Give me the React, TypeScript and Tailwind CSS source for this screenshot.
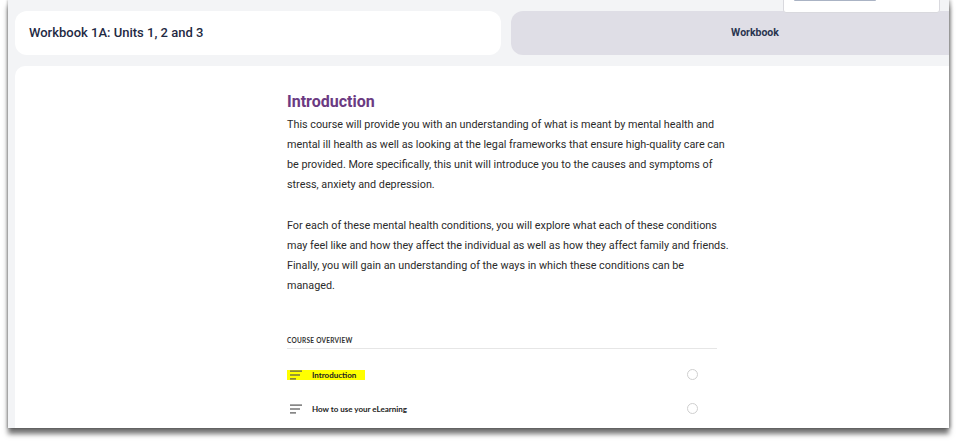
import React from "react";

const lessons = [
  { title: "Introduction", active: true },
  { title: "How to use your eLearning", active: false },
];

const intro = [
  "This course will provide you with an understanding of what is meant by mental health and",
  "mental ill health as well as looking at the legal frameworks that ensure high-quality care can",
  "be provided. More specifically, this unit will introduce you to the causes and symptoms of",
  "stress, anxiety and depression.",
];

const conditions = [
  "For each of these mental health conditions, you will explore what each of these conditions",
  "may feel like and how they affect the individual as well as how they affect family and friends.",
  "Finally, you will gain an understanding of the ways in which these conditions can be",
  "managed.",
];

function LinesIcon() {
  return (
    <svg width="12" height="10" viewBox="0 0 12 10" className="shrink-0">
      <rect x="0" y="0.5" width="12" height="1.2" fill="#555" />
      <rect x="0" y="4.4" width="10" height="1.2" fill="#555" />
      <rect x="0" y="8.3" width="6" height="1.2" fill="#555" />
    </svg>
  );
}

export default function App() {
  return (
    <div className="w-[958px] h-[443px] bg-white overflow-hidden" style={{ fontFamily: "Roboto, sans-serif" }}>
      <div className="ml-[8px] w-[941px] h-[428px] bg-[#f3f4f6] relative overflow-hidden shadow-[0_6px_5px_rgba(0,0,0,0.55),2px_0_3px_rgba(0,0,0,0.25),-1px_0_2px_rgba(0,0,0,0.2)]">
        {/* popup peeking at the top */}
        <div className="absolute top-[-4px] left-[775px] w-[157px] h-[17px] bg-white border border-[#d9d9de] rounded-b-[3px] px-[10px]">
          <div className="h-[2px] w-[82px] mt-[2px] bg-[#aab3c4] rounded-[1px]" />
        </div>

        {/* top row */}
        <div className="flex gap-[10px] pl-[7px] pt-[11px] w-[1200px]">
          <div className="w-[486px] h-[44px] bg-white rounded-[12px] flex items-center px-[14px]">
            <span className="text-[13px] font-medium text-[#1f2a44]">Workbook 1A: Units 1, 2 and 3</span>
          </div>
          <div className="w-[488px] h-[44px] bg-[#dfdee6] rounded-[12px] flex items-center justify-center">
            <span className="text-[10.5px] font-bold text-[#2a3550]">Workbook</span>
          </div>
        </div>

        {/* main card */}
        <div className="ml-[7px] mt-[11px] w-[960px] h-[400px] bg-white rounded-tl-[10px] pt-[26px] pl-[272px]">
          <div className="w-[450px]">
            <h1 className="text-[16px] leading-[20px] font-bold text-[#6b3a82]">Introduction</h1>
            <div className="mt-[3px] text-[10.8px] leading-[20px] text-[#2b2b2b] whitespace-nowrap">
              <p>
                {intro.map((line, i) => (
                  <React.Fragment key={i}>
                    {line}
                    {i < intro.length - 1 && <br />}
                  </React.Fragment>
                ))}
              </p>
              <p className="mt-[21px]">
                {conditions.map((line, i) => (
                  <React.Fragment key={i}>
                    {line}
                    {i < conditions.length - 1 && <br />}
                  </React.Fragment>
                ))}
              </p>
            </div>

            <div className="mt-[40px] w-[430px]" style={{ fontFamily: "Lato, sans-serif" }}>
              <div className="text-[6.5px] font-bold tracking-[0.04em] text-[#333] uppercase pb-[2px] border-b border-[#e6e6e6]">
                Course overview
              </div>
              <ul>
                {lessons.map((l) => (
                  <li key={l.title} className="h-[34px] flex items-center justify-between first:mt-[9px]">
                    <div
                      className={
                        l.active
                          ? "flex items-center gap-[10px] bg-[#ffff00] h-[10px] pl-[3px] pr-[9px]"
                          : "flex items-center gap-[10px] h-[10px] pl-[3px] pr-[9px]"
                      }
                    >
                      <LinesIcon />
                      <span className="text-[8px] font-bold text-[#222]">{l.title}</span>
                    </div>
                    <span className="w-[11px] h-[11px] rounded-full border border-[#cfcfcf] mr-[19px]" />
                  </li>
                ))}
              </ul>
            </div>
          </div>
        </div>
      </div>
    </div>
  );
}
